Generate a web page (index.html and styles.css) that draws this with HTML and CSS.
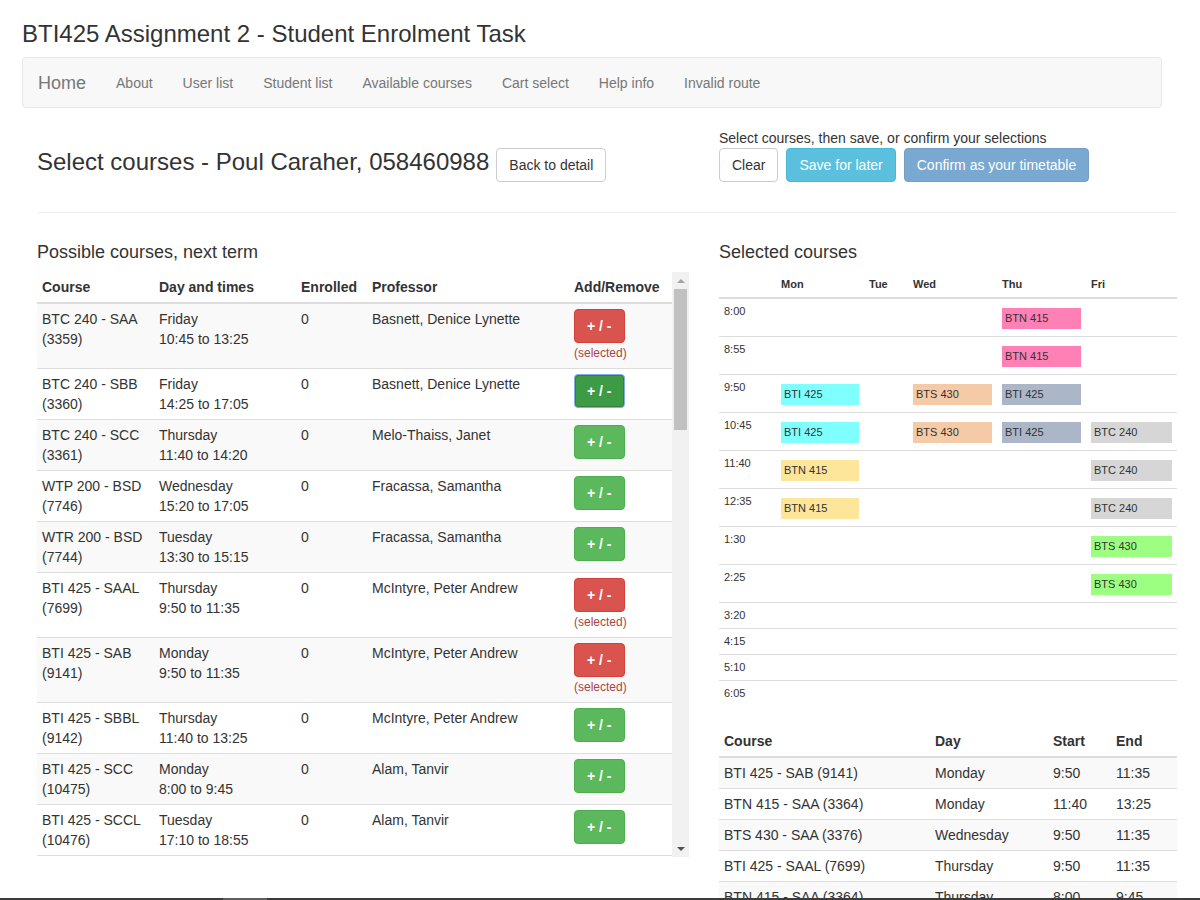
FILE: index.html
```html
<!DOCTYPE html>
<html lang="en">
<head>
<meta charset="utf-8">
<title>BTI425 Assignment 2 - Student Enrolment Task</title>
<link rel="stylesheet" href="styles.css">
</head>
<body>
<h3 class="page-title">BTI425 Assignment 2 - Student Enrolment Task</h3>
<nav class="navbar">
  <a class="brand" href="#">Home</a>
  <ul class="nav">
    <li><a href="#">About</a></li>
    <li><a href="#">User list</a></li>
    <li><a href="#">Student list</a></li>
    <li><a href="#">Available courses</a></li>
    <li><a href="#">Cart select</a></li>
    <li><a href="#">Help info</a></li>
    <li><a href="#">Invalid route</a></li>
  </ul>
</nav>

<main class="main">
  <div class="cols head">
    <div class="head-left">
      <h3 class="sub-title">Select courses - Poul Caraher, 058460988</h3>
      <button class="btn btn-default">Back to detail</button>
    </div>
    <div class="head-right">
      <div class="hint">Select courses, then save, or confirm your selections</div>
      <div class="btn-row">
        <button class="btn btn-default">Clear</button>
        <button class="btn btn-info">Save for later</button>
        <button class="btn btn-primary" disabled>Confirm as your timetable</button>
      </div>
    </div>
  </div>

  <hr class="rule">

  <div class="cols">
    <section>
      <h4 class="section-title">Possible courses, next term</h4>
      <div class="scroll-wrap">
        <div class="scroll">
          <table class="table striped courses">
            <colgroup><col class="c1"><col class="c2"><col class="c3"><col class="c4"><col class="c5"></colgroup>
            <thead>
              <tr><th>Course</th><th>Day and times</th><th>Enrolled</th><th>Professor</th><th>Add/Remove</th></tr>
            </thead>
            <tbody>
              <tr><td>BTC 240 - SAA (3359)</td><td>Friday<br>10:45 to 13:25</td><td>0</td><td>Basnett, Denice Lynette</td><td><div class="act"><button class="btn btn-toggle btn-danger">+ / -</button><span class="sel">(selected)</span></div></td></tr>
              <tr><td>BTC 240 - SBB (3360)</td><td>Friday<br>14:25 to 17:05</td><td>0</td><td>Basnett, Denice Lynette</td><td><div class="act"><button class="btn btn-toggle btn-success focused">+ / -</button></div></td></tr>
              <tr><td>BTC 240 - SCC (3361)</td><td>Thursday<br>11:40 to 14:20</td><td>0</td><td>Melo-Thaiss, Janet</td><td><div class="act"><button class="btn btn-toggle btn-success">+ / -</button></div></td></tr>
              <tr><td>WTP 200 - BSD (7746)</td><td>Wednesday<br>15:20 to 17:05</td><td>0</td><td>Fracassa, Samantha</td><td><div class="act"><button class="btn btn-toggle btn-success">+ / -</button></div></td></tr>
              <tr><td>WTR 200 - BSD (7744)</td><td>Tuesday<br>13:30 to 15:15</td><td>0</td><td>Fracassa, Samantha</td><td><div class="act"><button class="btn btn-toggle btn-success">+ / -</button></div></td></tr>
              <tr><td>BTI 425 - SAAL (7699)</td><td>Thursday<br>9:50 to 11:35</td><td>0</td><td>McIntyre, Peter Andrew</td><td><div class="act"><button class="btn btn-toggle btn-danger">+ / -</button><span class="sel">(selected)</span></div></td></tr>
              <tr><td>BTI 425 - SAB (9141)</td><td>Monday<br>9:50 to 11:35</td><td>0</td><td>McIntyre, Peter Andrew</td><td><div class="act"><button class="btn btn-toggle btn-danger">+ / -</button><span class="sel">(selected)</span></div></td></tr>
              <tr><td>BTI 425 - SBBL (9142)</td><td>Thursday<br>11:40 to 13:25</td><td>0</td><td>McIntyre, Peter Andrew</td><td><div class="act"><button class="btn btn-toggle btn-success">+ / -</button></div></td></tr>
              <tr><td>BTI 425 - SCC (10475)</td><td>Monday<br>8:00 to 9:45</td><td>0</td><td>Alam, Tanvir</td><td><div class="act"><button class="btn btn-toggle btn-success">+ / -</button></div></td></tr>
              <tr><td>BTI 425 - SCCL (10476)</td><td>Tuesday<br>17:10 to 18:55</td><td>0</td><td>Alam, Tanvir</td><td><div class="act"><button class="btn btn-toggle btn-success">+ / -</button></div></td></tr>
            </tbody>
          </table>
        </div>
        <div class="vbar" aria-hidden="true">
          <div class="vbar-btn"><span class="arrow-up"></span></div>
          <div class="vbar-track"><div class="vbar-thumb"></div></div>
          <div class="vbar-btn"><span class="arrow-down"></span></div>
        </div>
      </div>
    </section>

    <section>
      <h4 class="section-title">Selected courses</h4>
      <table class="tt">
        <colgroup><col class="t0"><col class="t1"><col class="t2"><col class="t3"><col class="t4"><col class="t5"></colgroup>
        <thead>
          <tr><th></th><th>Mon</th><th>Tue</th><th>Wed</th><th>Thu</th><th>Fri</th></tr>
        </thead>
        <tbody>
          <tr><td>8:00</td><td></td><td></td><td></td><td><div class="blk pink">BTN 415</div></td><td></td></tr>
          <tr><td>8:55</td><td></td><td></td><td></td><td><div class="blk pink">BTN 415</div></td><td></td></tr>
          <tr><td>9:50</td><td><div class="blk cyan">BTI 425</div></td><td></td><td><div class="blk peach">BTS 430</div></td><td><div class="blk slate">BTI 425</div></td><td></td></tr>
          <tr><td>10:45</td><td><div class="blk cyan">BTI 425</div></td><td></td><td><div class="blk peach">BTS 430</div></td><td><div class="blk slate">BTI 425</div></td><td><div class="blk grey">BTC 240</div></td></tr>
          <tr><td>11:40</td><td><div class="blk yellow">BTN 415</div></td><td></td><td></td><td></td><td><div class="blk grey">BTC 240</div></td></tr>
          <tr><td>12:35</td><td><div class="blk yellow">BTN 415</div></td><td></td><td></td><td></td><td><div class="blk grey">BTC 240</div></td></tr>
          <tr><td>1:30</td><td></td><td></td><td></td><td></td><td><div class="blk green">BTS 430</div></td></tr>
          <tr><td>2:25</td><td></td><td></td><td></td><td></td><td><div class="blk green">BTS 430</div></td></tr>
          <tr><td>3:20</td><td></td><td></td><td></td><td></td><td></td></tr>
          <tr><td>4:15</td><td></td><td></td><td></td><td></td><td></td></tr>
          <tr><td>5:10</td><td></td><td></td><td></td><td></td><td></td></tr>
          <tr><td>6:05</td><td></td><td></td><td></td><td></td><td></td></tr>
        </tbody>
      </table>

      <table class="table striped summary">
        <colgroup><col class="s1"><col class="s2"><col class="s3"><col class="s4"></colgroup>
        <thead>
          <tr><th>Course</th><th>Day</th><th>Start</th><th>End</th></tr>
        </thead>
        <tbody>
          <tr><td>BTI 425 - SAB (9141)</td><td>Monday</td><td>9:50</td><td>11:35</td></tr>
          <tr><td>BTN 415 - SAA (3364)</td><td>Monday</td><td>11:40</td><td>13:25</td></tr>
          <tr><td>BTS 430 - SAA (3376)</td><td>Wednesday</td><td>9:50</td><td>11:35</td></tr>
          <tr><td>BTI 425 - SAAL (7699)</td><td>Thursday</td><td>9:50</td><td>11:35</td></tr>
          <tr><td>BTN 415 - SAA (3364)</td><td>Thursday</td><td>8:00</td><td>9:45</td></tr>
        </tbody>
      </table>
    </section>
  </div>
</main>

<div class="bottom-bar"><span class="bottom-seg"></span></div>
</body>
</html>
```

FILE: styles.css
```css
* { box-sizing: border-box; }

html, body {
  margin: 0;
  overflow: hidden;
}

body {
  font-family: "Liberation Sans", Arial, Helvetica, sans-serif;
  font-size: 14px;
  line-height: 20px;
  color: #333;
  background: #fff;
}

.page-title {
  margin: 20px 0 10px 22px;
  font-size: 24px;
  font-weight: normal;
  line-height: 27px;
}

/* navbar */
.navbar {
  margin: 0 0 20px 22px;
  width: 1140px;
  height: 51px;
  background: #f8f8f8;
  border: 1px solid #e7e7e7;
  border-radius: 4px;
  display: flex;
  align-items: center;
}

.brand {
  padding: 0 15px;
  font-size: 18px;
  line-height: 20px;
  color: #777;
  text-decoration: none;
}

.nav {
  display: flex;
  list-style: none;
  margin: 0;
  padding: 0;
}

.nav a {
  display: block;
  padding: 0 15px;
  color: #777;
  text-decoration: none;
}

/* main */
.main {
  margin-left: 37px;
  width: 1140px;
}

.cols {
  display: grid;
  grid-template-columns: 652px 458px;
  column-gap: 30px;
  align-items: start;
}

.head-left {
  padding-top: 20px;
  display: flex;
  align-items: baseline;
  gap: 7px;
}

.sub-title {
  margin: 0;
  font-size: 24px;
  font-weight: normal;
  line-height: 26px;
}

.btn-row {
  display: flex;
  gap: 8px;
}

.rule {
  margin: 30px 0 20px;
  border: 0;
  border-top: 1px solid #eee;
  height: 0;
}

.section-title {
  margin: 9px 0 10px;
  font-size: 18px;
  font-weight: normal;
  line-height: 20px;
}

/* buttons */
.btn {
  display: inline-block;
  padding: 6px 12px;
  font-family: inherit;
  font-size: 14px;
  line-height: 20px;
  border: 1px solid transparent;
  border-radius: 4px;
  cursor: pointer;
  white-space: nowrap;
}

.btn-default { background: #fff; border-color: #ccc; color: #333; }
.btn-info { background: #5bc0de; border-color: #46b8da; color: #fff; }
.btn-primary { background: #337ab7; border-color: #2e6da4; color: #fff; }
.btn[disabled] { opacity: .65; cursor: not-allowed; }

.btn-toggle { font-weight: bold; }
.btn-danger { background: #d9534f; border-color: #d43f3a; color: #fff; }
.btn-success { background: #5cb85c; border-color: #4cae4c; color: #fff; }
.btn-success.focused {
  background: #3e9b45;
  border-color: #86ace6;
  box-shadow: inset 0 0 0 1px #3a7d3e;
}

/* tables */
.table {
  width: 100%;
  border-collapse: collapse;
  table-layout: fixed;
}

.table th {
  text-align: left;
  padding: 5px;
  font-weight: bold;
  vertical-align: bottom;
  border-bottom: 2px solid #ddd;
}

.table td {
  padding: 5px;
  vertical-align: top;
  border-top: 1px solid #ddd;
}

.striped tbody tr:nth-child(odd) { background: #f9f9f9; }

.courses tbody tr:last-child td { border-bottom: 1px solid #ddd; }

/* scrolling course list */
.scroll-wrap {
  display: flex;
  height: 585px;
}

.scroll {
  flex: 1;
  min-width: 0;
  overflow: hidden;
}

.vbar {
  width: 17px;
  flex: none;
  background: #f1f1f1;
  display: flex;
  flex-direction: column;
}

.vbar-btn {
  height: 17px;
  display: flex;
  align-items: center;
  justify-content: center;
}

.arrow-up {
  width: 0;
  height: 0;
  border-left: 4px solid transparent;
  border-right: 4px solid transparent;
  border-bottom: 4px solid #a3a3a3;
}

.arrow-down {
  width: 0;
  height: 0;
  border-left: 4px solid transparent;
  border-right: 4px solid transparent;
  border-top: 4px solid #505050;
}

.vbar-track {
  flex: 1;
  padding: 0 2px;
}

.vbar-thumb {
  height: 141px;
  background: #c1c1c1;
}

.courses .c1 { width: 117px; }
.courses .c2 { width: 142px; }
.courses .c3 { width: 71px; }
.courses .c4 { width: 202px; }
.courses .c5 { width: 103px; }

.act {
  display: flex;
  flex-direction: column;
  align-items: flex-start;
}

.sel {
  font-size: 12px;
  line-height: 20px;
  color: #a94442;
}

/* timetable */
.tt {
  width: 100%;
  border-collapse: collapse;
  table-layout: fixed;
  font-size: 11px;
  line-height: 15px;
  margin-bottom: 20px;
}

.tt .t0 { width: 57px; }
.tt .t1 { width: 88px; }
.tt .t2 { width: 44px; }
.tt .t3 { width: 89px; }
.tt .t4 { width: 89px; }
.tt .t5 { width: 91px; }

.tt th {
  text-align: left;
  padding: 5px;
  font-weight: bold;
  border-bottom: 2px solid #ddd;
}

.tt td {
  padding: 5px;
  vertical-align: top;
  border-top: 1px solid #ddd;
}

.blk {
  margin: 4px 0 2px;
  height: 21px;
  line-height: 21px;
  padding-left: 3px;
  white-space: nowrap;
}

.pink { background: #ff80b4; }
.cyan { background: #80ffff; }
.peach { background: #f5cba7; }
.slate { background: #abb7c8; }
.grey { background: #d6d6d6; }
.yellow { background: #fde699; }
.green { background: #9cff82; }

.summary .s1 { width: 211px; }
.summary .s2 { width: 118px; }
.summary .s3 { width: 63px; }
.summary .s4 { width: 66px; }

/* bottom strip */
.bottom-bar {
  position: fixed;
  left: 0;
  right: 0;
  bottom: 0;
  height: 2px;
  background: #3b3b3b;
}

.bottom-seg {
  position: absolute;
  left: 223px;
  top: 0;
  width: 44px;
  height: 2px;
  background: #5e5e5e;
}
```
